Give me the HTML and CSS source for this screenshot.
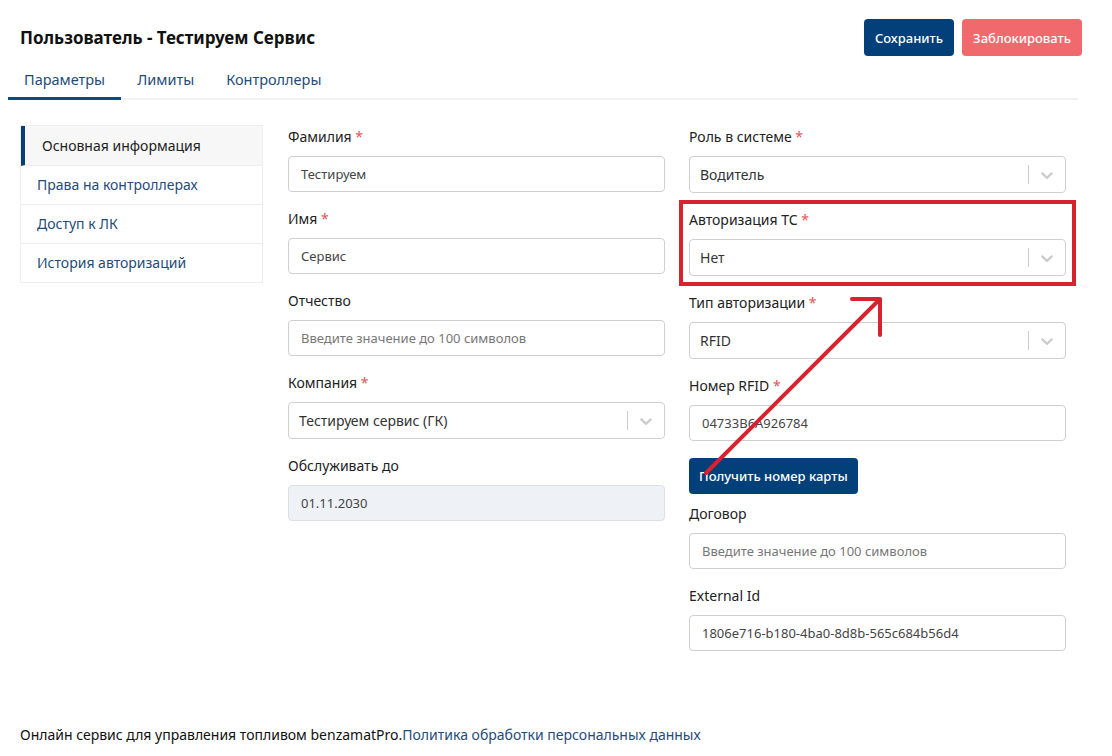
FILE: index.html
```html
<!DOCTYPE html>
<html lang="ru">
  <head>
    <meta charset="UTF-8" />
    <meta name="viewport" content="width=device-width, initial-scale=1.0" />
    <title>Пользователь - Тестируем Сервис</title>
    <link rel="stylesheet" href="styles.css">
  </head>

  <body>
    <div class="page">
      <div class="header">
        <h1 class="title">Пользователь - Тестируем Сервис</h1>
        <div class="actions">
          <button class="btn btn-primary">Сохранить</button>
          <button class="btn btn-danger">Заблокировать</button>
        </div>
      </div>

      <div class="tabs">
        <a class="tab active">Параметры</a>
        <a class="tab">Лимиты</a>
        <a class="tab">Контроллеры</a>
      </div>

      <div class="content">
        <ul class="side-nav">
          <li class="side-item active">Основная информация</li>
          <li class="side-item">Права на контроллерах</li>
          <li class="side-item">Доступ к ЛК</li>
          <li class="side-item">История авторизаций</li>
        </ul>

        <div class="form">
          <!-- левая колонка -->
          <div class="col">
            <div class="field">
              <label class="label">Фамилия <span class="req">*</span></label>
              <div class="input">Тестируем</div>
            </div>
            <div class="field">
              <label class="label">Имя <span class="req">*</span></label>
              <div class="input">Сервис</div>
            </div>
            <div class="field">
              <label class="label">Отчество</label>
              <div class="input placeholder">Введите значение до 100 символов</div>
            </div>
            <div class="field">
              <label class="label">Компания <span class="req">*</span></label>
              <div class="select">
                <span class="select-value">Тестируем сервис (ГК)</span>
                <span class="select-sep"></span>
                <svg class="chevron" viewBox="0 0 20 20"><path d="M4.516 7.548c0.436-0.446 1.043-0.481 1.576 0l3.908 3.747 3.908-3.747c0.533-0.481 1.141-0.446 1.574 0 0.436 0.445 0.408 1.197 0 1.615-0.406 0.418-4.695 4.502-4.695 4.502-0.217 0.223-0.502 0.335-0.787 0.335s-0.57-0.112-0.789-0.335c0 0-4.287-4.084-4.695-4.502s-0.436-1.170 0-1.615z"/></svg>
              </div>
            </div>
            <div class="field">
              <label class="label">Обслуживать до</label>
              <div class="input disabled">01.11.2030</div>
            </div>
          </div>

          <!-- правая колонка -->
          <div class="col">
            <div class="field">
              <label class="label">Роль в системе <span class="req">*</span></label>
              <div class="select">
                <span class="select-value">Водитель</span>
                <span class="select-sep"></span>
                <svg class="chevron" viewBox="0 0 20 20"><path d="M4.516 7.548c0.436-0.446 1.043-0.481 1.576 0l3.908 3.747 3.908-3.747c0.533-0.481 1.141-0.446 1.574 0 0.436 0.445 0.408 1.197 0 1.615-0.406 0.418-4.695 4.502-4.695 4.502-0.217 0.223-0.502 0.335-0.787 0.335s-0.57-0.112-0.789-0.335c0 0-4.287-4.084-4.695-4.502s-0.436-1.170 0-1.615z"/></svg>
              </div>
            </div>
            <div class="field marked">
              <label class="label">Авторизация ТС <span class="req">*</span></label>
              <div class="select">
                <span class="select-value">Нет</span>
                <span class="select-sep"></span>
                <svg class="chevron" viewBox="0 0 20 20"><path d="M4.516 7.548c0.436-0.446 1.043-0.481 1.576 0l3.908 3.747 3.908-3.747c0.533-0.481 1.141-0.446 1.574 0 0.436 0.445 0.408 1.197 0 1.615-0.406 0.418-4.695 4.502-4.695 4.502-0.217 0.223-0.502 0.335-0.787 0.335s-0.57-0.112-0.789-0.335c0 0-4.287-4.084-4.695-4.502s-0.436-1.170 0-1.615z"/></svg>
              </div>
            </div>
            <div class="field">
              <label class="label">Тип авторизации <span class="req">*</span></label>
              <div class="select">
                <span class="select-value">RFID</span>
                <span class="select-sep"></span>
                <svg class="chevron" viewBox="0 0 20 20"><path d="M4.516 7.548c0.436-0.446 1.043-0.481 1.576 0l3.908 3.747 3.908-3.747c0.533-0.481 1.141-0.446 1.574 0 0.436 0.445 0.408 1.197 0 1.615-0.406 0.418-4.695 4.502-4.695 4.502-0.217 0.223-0.502 0.335-0.787 0.335s-0.57-0.112-0.789-0.335c0 0-4.287-4.084-4.695-4.502s-0.436-1.170 0-1.615z"/></svg>
              </div>
            </div>
            <div class="field">
              <label class="label">Номер RFID <span class="req">*</span></label>
              <div class="input">04733B6A926784</div>
            </div>
            <button class="btn btn-primary btn-card">Получить номер карты</button>
            <div class="field">
              <label class="label">Договор</label>
              <div class="input placeholder">Введите значение до 100 символов</div>
            </div>
            <div class="field">
              <label class="label">External Id</label>
              <div class="input">1806e716-b180-4ba0-8d8b-565c684b56d4</div>
            </div>
          </div>
        </div>
      </div>

      <div class="footer">
        Онлайн сервис для управления топливом benzamatPro.<a class="footer-link">Политика обработки персональных данных</a>
      </div>
    </div>

    <!-- стрелка-пометка поверх страницы -->
    <svg class="arrow" width="1112" height="756" viewBox="0 0 1112 756">
      <path d="M706 473 L880 299 M852 299 L880 299 L880 335" />
    </svg>
  </body>
</html>
```

FILE: styles.css
```css
body {
  margin: 0;
  font-family: "Noto Sans", "Open Sans", sans-serif;
  color: #222;
  background-color: #fff;
  position: relative;
}

.page {
  display: flex;
  flex-direction: column;
  height: 100vh;
  box-sizing: border-box;
  padding-bottom: 11px;
}

.header {
  display: flex;
  justify-content: space-between;
  align-items: center;
  padding: 19px 30px 0 20px;
}

.title {
  margin: 0;
  font-size: 17px;
  font-weight: 700;
  color: #111;
  line-height: 37px;
}

.actions {
  display: flex;
  gap: 8px;
}

.btn {
  border: none;
  border-radius: 4px;
  color: white;
  font-family: inherit;
  font-size: 13px;
  font-weight: 500;
  height: 37px;
  padding: 0 11px;
  cursor: pointer;
}

.btn-primary {
  background-color: #033f79;
}

.btn-danger {
  background-color: #f06a6d;
}

.tabs {
  display: flex;
  margin: 4px 34px 0 8px;
  border-bottom: 2px solid #f1f1f1;
}

.tab {
  padding: 9px 16px 8px;
  line-height: 20px;
  font-size: 14.5px;
  color: #1f4c78;
  border-bottom: 3px solid transparent;
  margin-bottom: -2px;
}

.tab.active {
  border-bottom-color: #0d4a7e;
}

.content {
  display: flex;
  margin-top: 25px;
  padding-left: 20px;
}

.side-nav {
  list-style: none;
  margin: 0;
  padding: 0;
  width: 243px;
  align-self: flex-start;
  border: 1px solid #eeeeee;
  box-sizing: border-box;
}

.side-item {
  height: 38px;
  line-height: 38px;
  padding: 0 16px;
  font-size: 14px;
  color: #1f4c78;
  border-bottom: 1px solid #eeeeee;
}

.side-item:last-child {
  border-bottom: none;
}

.side-item.active {
  height: 39px;
  line-height: 39px;
  background-color: #f7f7f7;
  color: #222;
  border-left: 4px solid #0b3f73;
  padding-left: 17px;
}

.form {
  display: grid;
  grid-template-columns: 377px 377px;
  column-gap: 24px;
  margin-left: 25px;
  padding-top: 2px;
}

.col {
  display: flex;
  flex-direction: column;
}

.field {
  margin-bottom: 17px;
}

.field.marked {
  outline: 4px solid #d8232f;
  outline-offset: 6px;
}

.label {
  display: block;
  font-size: 14px;
  line-height: 20px;
  margin-bottom: 9px;
  color: #222;
}

.req {
  color: #e25555;
}

.input {
  height: 36px;
  box-sizing: border-box;
  border: 1px solid #cfcfcf;
  border-radius: 4px;
  padding: 0 12px;
  font-size: 13px;
  line-height: 34px;
  color: #444;
}

.input.placeholder {
  color: #777;
}

.input.disabled {
  background-color: #eef1f6;
  border-color: #dcdfe4;
}

.select {
  display: flex;
  align-items: center;
  height: 37px;
  box-sizing: border-box;
  border: 1px solid #cfcfcf;
  border-radius: 4px;
  padding-left: 10px;
}

.select-value {
  flex: 1;
  font-size: 14px;
  color: #333;
}

.select-sep {
  width: 1px;
  align-self: stretch;
  margin: 8px 0;
  background-color: #cccccc;
}

.chevron {
  width: 20px;
  height: 20px;
  padding: 0 8px;
  fill: #cccccc;
}

.btn-card {
  align-self: flex-start;
  height: 36px;
  padding: 0 10px;
  margin-bottom: 10px;
}

.footer {
  margin-top: auto;
  padding-left: 20px;
  font-size: 14px;
  line-height: 20px;
  color: #111;
}

.footer-link {
  color: #1f4c78;
}

.arrow {
  position: absolute;
  top: 0;
  left: 0;
  pointer-events: none;
}

.arrow path {
  fill: none;
  stroke: #d8232f;
  stroke-width: 4;
  stroke-linecap: round;
  stroke-linejoin: round;
}
```
